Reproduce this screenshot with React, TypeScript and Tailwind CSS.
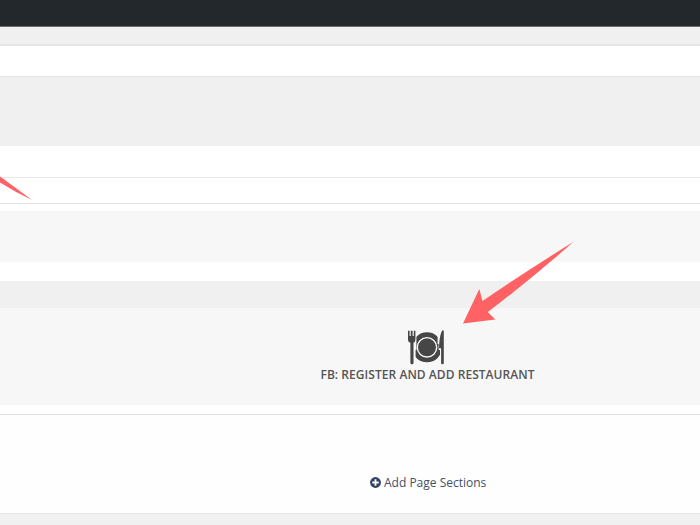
import React from 'react';

function DiningIcon() {
  return (
    <svg className="block h-[36px] w-[38px]" viewBox="0 0 38 36" fill="#464646" aria-hidden="true">
      <defs>
        <clipPath id="plate-rim">
          <path d="M9.400 0H30.600V14H31.600V20H33V36H8.600V20H9.400Z" />
        </clipPath>
      </defs>
      <path d="M1 .8h1.600V6h1.200V.8h1.800V6h1.200V.8h1.600V9.500c0 1.600-.7 2.600-1.900 3.200V33c0 1.700-3.100 1.700-3.100 0V12.700C1.600 12.100 1 11.100 1 9.500Z" />
      <path d="M36.800 1v32c0 1.800-2.700 1.800-2.700 0V18.300h-2C32.100 12.500 32.900 4.500 35.100.8c.6-.8 1.700-.7 1.700.2Z" />
      <circle cx="20" cy="17.300" r="9" />
      <circle cx="20" cy="17.300" r="12.700" fill="none" stroke="#464646" strokeWidth="4.600" clipPath="url(#plate-rim)" />
    </svg>
  );
}

function PlusCircle() {
  return (
    <svg className="relative -top-px h-[11px] w-[11px]" viewBox="0 0 11 11" aria-hidden="true">
      <circle cx="5.500" cy="5.500" r="5.400" fill="#2f4365" />
      <path d="M5.500 2.300v6.400M2.300 5.500h6.400" stroke="#fff" strokeWidth="1.800" />
    </svg>
  );
}

export default function App() {
  return (
    <div className="relative flex h-[525px] w-[700px] flex-col overflow-hidden bg-[#f0f0f0] font-['Open_Sans','Noto_Sans',sans-serif]">
      <header className="h-[27px] shrink-0 border-b border-[#6a6e71] bg-[#23282d]" />
      <div className="h-[17px] shrink-0" />
      <div className="h-[33px] shrink-0 border-b border-t-2 border-[#e5e5e5] bg-white" />
      <div className="h-[69px] shrink-0 bg-[#f0f0f0]" />
      <div className="h-[32px] shrink-0 border-b border-[#eaeaea] bg-white" />
      <div className="h-[26px] shrink-0 border-b border-[#dfdfdf] bg-white" />
      <section className="h-[77px] shrink-0 bg-white pt-[7px]">
        <div className="h-[51px] bg-[#f7f7f7]" />
      </section>
      <div className="h-[27px] shrink-0 bg-[#f0f0f0]" />
      <section className="flex h-[97px] shrink-0 flex-col items-center bg-[#f7f7f7] pl-[155px] pt-[22px]">
        <div className="-ml-[3px]"><DiningIcon /></div>
        <p className="whitespace-nowrap text-[12px] font-semibold leading-[18px] tracking-[0.05px] text-[#555]">FB: REGISTER AND ADD RESTAURANT</p>
      </section>
      <div className="h-[10px] shrink-0 border-b border-[#dedede] bg-white" />
      <section className="flex h-[99px] shrink-0 items-start border-b border-[#e6e6e6] bg-[#fefefe] pl-[370px] pt-[59px]">
        <button className="flex h-[18px] items-center gap-[3px] whitespace-nowrap text-[12px] leading-[18px] text-[#415166]">
          <PlusCircle />
          <span>Add Page Sections</span>
        </button>
      </section>
      <svg className="pointer-events-none absolute inset-0 h-[525px] w-[700px]" viewBox="0 0 700 525" fill="#ff6265" aria-hidden="true">
        <path d="M463 323.500 479.300 289 482.500 301 Q528 270 573.500 241.800 Q532 278.500 487.800 312L495.300 319.500Z" />
        <path d="M0 176.500Q16 188 32 200Q15 192 0 182.500Z" />
      </svg>
    </div>
  );
}
